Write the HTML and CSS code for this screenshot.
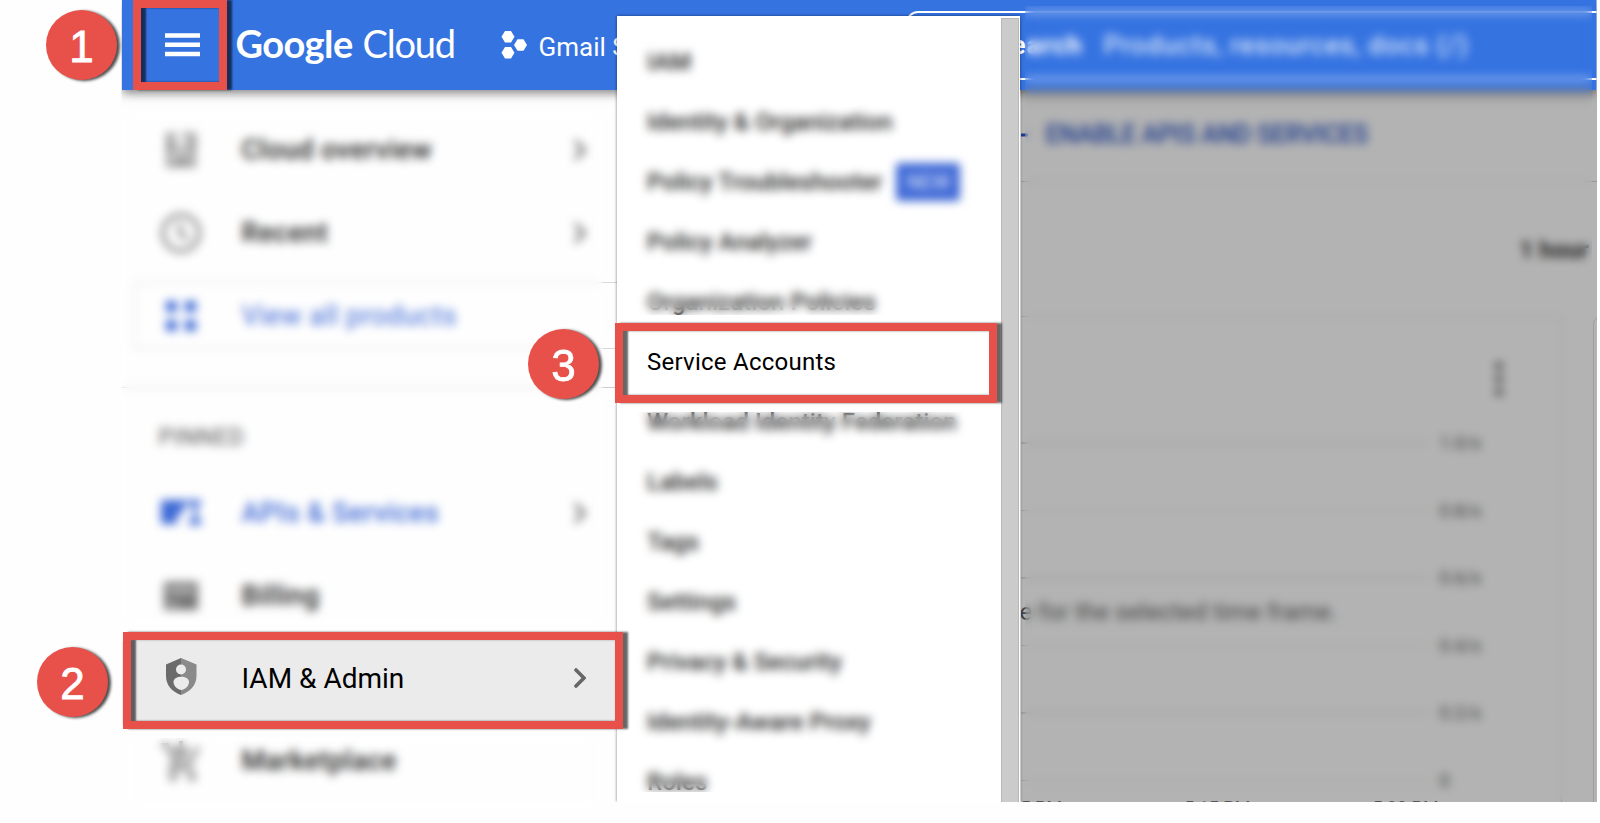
FILE: index.html
```html
<!DOCTYPE html>
<html lang="en">
<head>
<meta charset="utf-8">
<title>Google Cloud</title>
<link rel="stylesheet" href="styles.css">
</head>
<body>
<div class="shell">
  <header class="topbar">
    <svg class="burger" viewBox="0 0 36 24"><path d="M0 2.3h36M0 11.8h36M0 21.3h36" stroke="#fff" stroke-width="4.6"/></svg>
    <div class="logo"><span class="logo-google">Google</span><span class="logo-cloud">Cloud</span></div>
    <svg class="hexes" viewBox="0 0 26 28" fill="#fff"><path d="M4 0h6l3.500 5.800L10 11.600H4L.5 5.800zM4 16h6l3.500 5.800L10 27.600H4L.5 21.800zM16.500 8.200h6L26 14l-3.500 5.800h-6L13 14z"/></svg>
    <span class="project">Gmail S</span>
    <div class="search"><b>Search</b><span>Products, resources, docs (/)</span></div>
  </header>

  <main class="body">
    <nav class="sidebar">
      <div class="row"><svg class="icon" viewBox="0 0 42 42" fill="none" stroke="#888" stroke-width="4"><path d="M6 6h10M22 6h14M6 14h12M24 14h12M6 21h28M6 36h30M9 6v15M34 6v15M9 22v14M33 22v14M14 29h16M17 32h8"/></svg><span class="label">Cloud overview</span><svg class="chev" viewBox="0 0 12 20"><path d="M2 2l8 8-8 8"/></svg></div>
      <div class="row"><svg class="icon" viewBox="0 0 42 42" fill="none" stroke="#777" stroke-width="3.500"><circle cx="21" cy="21" r="18"/><path d="M20 11v11l8 5"/></svg><span class="label">Recent</span><svg class="chev" viewBox="0 0 12 20"><path d="M2 2l8 8-8 8"/></svg></div>
      <div class="all"><svg class="icon" viewBox="0 0 42 42" fill="#3d69d6"><path d="M6 6h11v11H6zM25 6h11v11H25zM6 25h11v11H6zM25 25h11v11H25z"/></svg><span class="label view">View all products</span></div>
      <div class="section">PINNED</div>
      <div class="row blue"><svg class="icon" viewBox="0 0 42 42" fill="#3d69d6"><path d="M1 8h26v6h-4v8h-6v10H1zM28 8h13v5h-4v14h4v6H29v-5h4V13h-5z"/></svg><span class="label">APIs &amp; Services</span><svg class="chev" viewBox="0 0 12 20"><path d="M2 2l8 8-8 8"/></svg></div>
      <div class="row"><svg class="icon" viewBox="0 0 42 42" fill="#777"><path fill-rule="evenodd" d="M4 7h34v28H4zM8 14v3h26v-3zM8 28v2h10v-2z"/></svg><span class="label">Billing</span></div>
      <div class="row current"><svg class="icon" viewBox="0 0 42 42"><path d="M21 1 6 7.500V19c0 9.500 6.500 16 15 19z" fill="#6b6b6b"/><path d="M21 1l15.500 6.500V19c0 9.500-7 16-15.500 19z" fill="#8a8a8a"/><circle cx="21" cy="12.500" r="5" fill="#ebebeb"/><path d="M13.500 25c0-7 15.500-7 15.500 0 0 4.500-4.500 7.500-7.750 8-3.250-.5-7.750-3.500-7.750-8z" fill="#ebebeb"/></svg><span class="label">IAM &amp; Admin</span><svg class="chev" viewBox="0 0 12 20"><path d="M2 2l8 8-8 8"/></svg></div>
      <div class="row"><svg class="icon" viewBox="0 0 42 42" fill="none" stroke="#888" stroke-width="4"><path d="M1 5h6l8 17h15l8-15M15 22l-4 7h23M21 1v14M14 9l7 7 7-7"/><circle cx="13" cy="37" r="2"/><circle cx="32" cy="37" r="2"/></svg><span class="label">Marketplace</span></div>
    </nav>

    <section class="page">
      <div class="toolbar"><svg class="plus" viewBox="0 0 18 18"><path d="M0 9h18M9 0v18" stroke="#1c3b8c" stroke-width="3"/></svg><span class="enable">ENABLE APIS AND SERVICES</span></div>
      <div class="range">1 hour</div>
      <div class="cards">
        <div class="card">
          <svg class="dots" viewBox="0 0 8 34" fill="#444"><circle cx="4" cy="4" r="3.800"/><circle cx="4" cy="17" r="3.800"/><circle cx="4" cy="30" r="3.800"/></svg>
          <div class="tick"><i></i><span>1.0/s</span></div>
          <div class="tick"><i></i><span>0.8/s</span></div>
          <div class="tick"><i></i><span>0.6/s</span></div>
          <div class="tick"><i></i><span>0.4/s</span></div>
          <div class="tick"><i></i><span>0.2/s</span></div>
          <div class="tick"><i></i><span>0</span></div>
          <p class="empty">e for the selected time frame.</p>
          <div class="times"><span>5 PM</span><span>5:15 PM</span><span>5:30 PM</span></div>
        </div>
        <div class="card-next"></div>
      </div>
    </section>
  </main>

  <div class="veil veil-page"></div>
  <div class="veil veil-nav"></div>
  <div class="veil veil-market"></div>

  <aside class="submenu">
    <ul class="items">
      <li>IAM</li>
      <li>Identity &amp; Organization</li>
      <li>Policy Troubleshooter<span class="new">NEW</span></li>
      <li>Policy Analyzer</li>
      <li>Organization Policies</li>
      <li class="target">Service Accounts</li>
      <li>Workload Identity Federation</li>
      <li>Labels</li>
      <li>Tags</li>
      <li>Settings</li>
      <li>Privacy &amp; Security</li>
      <li>Identity-Aware Proxy</li>
      <li>Roles</li>
    </ul>
    <div class="scroll"></div>
  </aside>
  <div class="veil veil-menu-top"></div>
  <div class="veil veil-menu-bottom"></div>

  <div class="frame frame-1"></div>
  <div class="frame frame-2"></div>
  <div class="frame frame-3"></div>
  <div class="step step-1">1</div>
  <div class="step step-2">2</div>
  <div class="step step-3">3</div>
</div>
</body>
</html>
```
FILE: styles.css
```css
* { box-sizing: border-box; }
body { margin: 0; background: #fff; font-family: Roboto, "Liberation Sans", sans-serif; color: #222; }
.shell { position: relative; width: 1600px; height: 823px; overflow: hidden; background: #fefefe; }
svg { display: block; flex: none; }

.topbar { position: relative; z-index: 1; height: 90px; width: 1475px; margin-left: 121.500px; background: #3573e1; color: #fff; display: flex; align-items: center; padding-left: 43px; box-shadow: 0 3px 10px rgba(0,0,0,.5); clip-path: inset(0 0 -24px 0); white-space: nowrap; }
.burger { width: 35px; height: 24px; }
.logo { display: flex; gap: 8px; margin: -4px 0 0 36px; font-family: Lato, sans-serif; font-size: 38px; line-height: 50px; }
.logo-google { font-weight: 700; width: 119px; letter-spacing: -.6px; }
.logo-cloud { font-weight: 400; width: 91px; letter-spacing: -1.200px; }
.hexes { width: 26px; height: 28px; margin-left: 47px; }
.project { flex: none; font-size: 26px; margin: 3px 0 0 12px; width: 367px; }
.search { flex: none; width: 760px; height: 69px; border: 2px solid #fff; border-radius: 12px; display: flex; align-items: center; gap: 21px; padding-left: 87px; font-size: 26px; letter-spacing: 1.100px; }
.search b { font-weight: 700; }

.body { display: flex; width: 1475px; height: 712px; margin-left: 121.500px; }
.sidebar { width: 495px; flex: none; padding-top: 18px; background: #fefefe; }
.row { height: 83px; display: flex; align-items: center; padding-left: 38px; }
.icon { width: 42px; height: 42px; }
.label { margin-left: 40px; width: 332px; font-size: 27px; font-weight: 500; letter-spacing: .45px; white-space: nowrap; }
.chev { width: 12px; height: 20px; fill: none; stroke: #666; stroke-width: 3.6; stroke-linecap: round; }
.blue .label, .view { color: #3d69d6; }
.view { font-weight: 400; letter-spacing: .55px; }
.all { height: 67px; margin: 8px 0 38px 13px; border: 1.500px solid #d8d8d8; border-right: 0; display: flex; align-items: center; padding-left: 24px; }
.section { height: 84px; border-top: 1.500px solid #ccc; padding: 36px 0 0 37px; font-size: 23px; letter-spacing: .7px; line-height: 28px; color: #555; }
.current { height: 84px; margin-top: 4px; padding-bottom: 10px; background: #ebebeb; }
.current + .row { margin-top: -6px; }
.current .label { font-size: 28px; font-weight: 400; letter-spacing: 0; color: #000; }

.page { flex: 1; margin-left: 404px; background: #b3b3b3; overflow: hidden; white-space: nowrap; }
.toolbar { height: 92px; border-bottom: 1.500px solid #999; display: flex; align-items: center; color: #1c3b8c; font-weight: 500; padding-bottom: 2px; }
.plus { width: 18px; height: 18px; margin-left: -11px; }
.enable { font-size: 25px; letter-spacing: -.3px; margin-left: 18px; }
.range { height: 134px; padding: 53px 8px 0 0; text-align: right; font-size: 24px; line-height: 30px; font-weight: 700; }
.cards { display: flex; gap: 31px; }
.card { position: relative; flex: none; width: 541px; height: 500px; border: 1.500px solid #9f9f9f; border-left: 0; padding-top: 92px; }
.card-next { width: 30px; height: 500px; border: 1.500px solid #9f9f9f; border-radius: 8px; flex: none; }
.dots { position: absolute; left: 474px; top: 45px; width: 8px; height: 34px; }
.tick { height: 67.500px; display: flex; align-items: center; font-size: 18px; color: #444; gap: 11px; }
.tick i { width: 408px; height: 1.500px; background: #9f9f9f; }
.empty { position: absolute; left: -1px; top: 280px; margin: 0; font-size: 24px; line-height: 30px; letter-spacing: .15px; color: #444; }
.times { position: absolute; left: 0; top: 480px; display: flex; gap: 122px; font-size: 18px; color: #555; }

.veil { position: absolute; backdrop-filter: blur(5px); }
.veil-page { z-index: 2; left: 1025px; top: 6px; width: 567px; height: 794px; }
.veil-nav { z-index: 2; left: 122px; top: 113px; width: 481px; height: 511px; }
.veil-market { z-index: 2; left: 128px; top: 738px; width: 473px; height: 70px; }
.veil-menu-top { z-index: 4; left: 623px; top: 33px; width: 378px; height: 282px; }
.veil-menu-bottom { z-index: 4; left: 632px; top: 412px; width: 355px; height: 380px; }

.submenu { position: absolute; z-index: 3; left: 617px; top: 16px; width: 403px; height: 786px; background: #fff; display: flex; justify-content: space-between; box-shadow: 0 0 3px rgba(0,0,0,.5); clip-path: inset(-3px -3px 0 -3px); }
.items { list-style: none; margin: 0; padding: 16px 0 0 30px; height: 776px; overflow: hidden; font-size: 24px; font-weight: 500; letter-spacing: .05px; white-space: nowrap; }
.items li { height: 60px; display: flex; align-items: center; }
.items .target { font-weight: 400; letter-spacing: .25px; color: #000; }
.new { margin-left: 14px; width: 64px; height: 38px; border-radius: 3px; background: #3f69d6; color: #dfe7fb; font-size: 20px; font-weight: 400; display: flex; align-items: center; justify-content: center; }
.scroll { width: 18px; margin: 2px 1px 0 0; background: #cbcbcb; border: 1px solid #b8b8b8; border-bottom: 0; }

.frame { position: absolute; z-index: 5; border: 8.500px solid #e8514a; box-shadow: 5px 0 2px rgba(0,0,0,.6), inset 5px 0 2px rgba(0,0,0,.6); }
.frame-1 { left: 133px; top: 0; width: 94px; height: 90px; }
.frame-2 { left: 123px; top: 632px; width: 500px; height: 97px; }
.frame-3 { left: 615px; top: 323px; width: 382px; height: 80px; }
.step { position: absolute; z-index: 6; width: 71px; height: 70px; border-radius: 50%; background: #e8514a; color: #fff; box-shadow: 3px 1px 3px rgba(0,0,0,.7); display: flex; align-items: center; justify-content: center; font-family: "Liberation Sans", sans-serif; font-size: 44px; line-height: 1; padding-top: 3px; -webkit-text-stroke: .8px #fff; }
.step-1 { left: 46px; top: 10px; }
.step-2 { left: 37px; top: 647px; }
.step-3 { left: 528px; top: 329px; }
```
